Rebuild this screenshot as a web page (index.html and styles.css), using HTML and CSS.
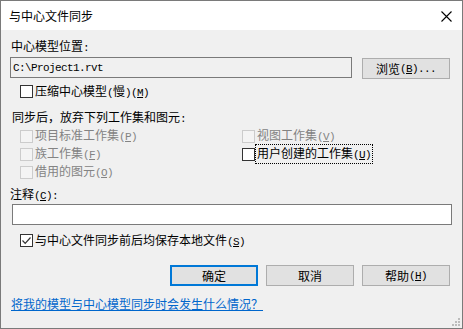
FILE: index.html
```html
<!DOCTYPE html>
<html lang="zh-CN">
<head>
<meta charset="utf-8">
<title>与中心文件同步</title>
<link rel="stylesheet" href="styles.css">
</head>
<body>
<div class="dialog">
  <div class="titlebar">
    <span class="title">与中心文件同步</span>
    <svg class="close" width="11" height="11" viewBox="0 0 11 11"><path d="M0.5 0.5L10.5 10.5M10.5 0.5L0.5 10.5" stroke="#000" stroke-width="1.1" fill="none"/></svg>
  </div>
  <div class="content">
    <div class="label l1">中心模型位置<span class="a">:</span></div>
    <div class="row path-row">
      <div class="edit readonly"><span class="a">C:\Project1.rvt</span></div>
      <div class="btn browse">浏览<span class="a">(<u>B</u>)...</span></div>
    </div>
    <div class="check compress"><span class="box"></span><span>压缩中心模型<span class="a">(</span>慢<span class="a">)(<u>M</u>)</span></span></div>
    <div class="label l2">同步后，放弃下列工作集和图元<span class="a">:</span></div>
    <div class="grid">
      <div class="check disabled"><span class="box"></span><span>项目标准工作集<span class="a">(<u>P</u>)</span></span></div>
      <div class="check disabled"><span class="box"></span><span>视图工作集<span class="a">(<u>V</u>)</span></span></div>
      <div class="check disabled"><span class="box"></span><span>族工作集<span class="a">(<u>F</u>)</span></span></div>
      <div class="check"><span class="box"></span><span class="focus">用户创建的工作集<span class="a">(<u>U</u>)</span></span></div>
      <div class="check disabled"><span class="box"></span><span>借用的图元<span class="a">(<u>O</u>)</span></span></div>
    </div>
    <div class="label l3">注释<span class="a">(<u>C</u>):</span></div>
    <div class="edit comment"></div>
    <div class="check save"><span class="box checked"><svg width="11" height="11" viewBox="0 0 11 11"><path d="M1.5 5.5L4.2 8.3L9.5 2.5" stroke="#333" stroke-width="1.2" fill="none"/></svg></span><span>与中心文件同步前后均保存本地文件<span class="a">(<u>S</u>)</span></span></div>
    <div class="row buttons">
      <div class="btn default">确定</div>
      <div class="btn">取消</div>
      <div class="btn">帮助<span class="a">(<u>H</u>)</span></div>
    </div>
    <a class="link" href="#">将我的模型与中心模型同步时会发生什么情况？</a>
  </div>
  <svg class="grip" width="9" height="9" viewBox="0 0 9 9">
    <rect x="6" y="0" width="2" height="2" fill="#bcbcbc"/>
    <rect x="3" y="3" width="2" height="2" fill="#bcbcbc"/>
    <rect x="6" y="3" width="2" height="2" fill="#bcbcbc"/>
    <rect x="0" y="6" width="2" height="2" fill="#bcbcbc"/>
    <rect x="3" y="6" width="2" height="2" fill="#bcbcbc"/>
    <rect x="6" y="6" width="2" height="2" fill="#bcbcbc"/>
  </svg>
</div>
</body>
</html>
```

FILE: styles.css
```css
html, body {
  margin: 0;
  padding: 0;
  background: #f0f0f0;
}
body {
  font-family: "Noto Sans CJK SC", "Noto Sans", sans-serif;
  font-size: 12px;
  color: #000;
}
.dialog {
  position: relative;
  width: 463px;
  height: 329px;
  box-sizing: border-box;
  border: 1px solid #7a7a7a;
  background: #f0f0f0;
  display: flex;
  flex-direction: column;
}
.titlebar {
  height: 29px;
  background: #fff;
  display: flex;
  align-items: center;
  justify-content: space-between;
  padding: 0 10px 0 8px;
}
.title {
  line-height: 16px;
  margin-top: 1px;
}
.close {
  display: block;
  margin-top: 1px;
}
.content {
  display: flex;
  flex-direction: column;
  align-items: flex-start;
  padding-left: 9px;
}
.a {
  font-family: "Liberation Mono", monospace;
  font-size: 11px;
  letter-spacing: -0.6px;
}
.label {
  line-height: 16px;
  height: 16px;
}
.l1 { margin-top: 8px; margin-left: 1px; }
.l2 { margin-top: 10px; margin-left: 2px; }
.l3 { margin-top: 5px; }
.row {
  display: flex;
  align-items: flex-start;
}
.path-row {
  margin-top: 3px;
  gap: 10px;
}
.edit {
  box-sizing: border-box;
  height: 21px;
  border: 1px solid #7a7a7a;
  background: #fff;
}
.edit.readonly {
  width: 342px;
  background: #f0f0f0;
  display: flex;
  align-items: center;
  padding-left: 2px;
}
.btn {
  box-sizing: border-box;
  width: 88px;
  height: 21px;
  border: 1px solid #adadad;
  background: #e1e1e1;
  display: flex;
  align-items: center;
  justify-content: center;
  line-height: 16px;
}
.browse { margin-top: 1px; }
.btn.default {
  border: 2px solid #0078d7;
}
.check {
  display: flex;
  align-items: center;
  gap: 2px;
  height: 18px;
  line-height: 16px;
}
.box {
  box-sizing: border-box;
  width: 13px;
  height: 13px;
  border: 1px solid #333;
  background: #fff;
  display: flex;
  align-items: center;
  justify-content: center;
}
.compress {
  margin-top: 5px;
  margin-left: 10px;
  height: 15px;
}
.check.disabled {
  color: #838383;
}
.check.disabled .box {
  border-color: #cccccc;
  background: #f4f4f4;
}
.focus {
  outline: 1px dotted #000;
  outline-offset: 0;
  padding: 0 1px;
  margin-left: -1px;
}
.grid {
  margin-top: 2px;
  margin-left: 10px;
  display: grid;
  grid-template-columns: 222px 200px;
}
.comment {
  margin-top: 2px;
  margin-left: 2px;
  width: 440px;
}
.save {
  margin-top: 8px;
  margin-left: 10px;
  height: 15px;
}
.box.checked {
  border-color: #333;
}
.box svg { display: block; }
.buttons {
  margin-top: 17px;
  align-self: stretch;
  justify-content: flex-end;
  gap: 8px;
  padding-right: 12px;
}
.link {
  margin-top: 10px;
  margin-left: 1px;
  line-height: 16px;
  color: #0066cc;
  text-decoration: underline;
}
.grip {
  position: absolute;
  right: 1px;
  bottom: 1px;
}
```
